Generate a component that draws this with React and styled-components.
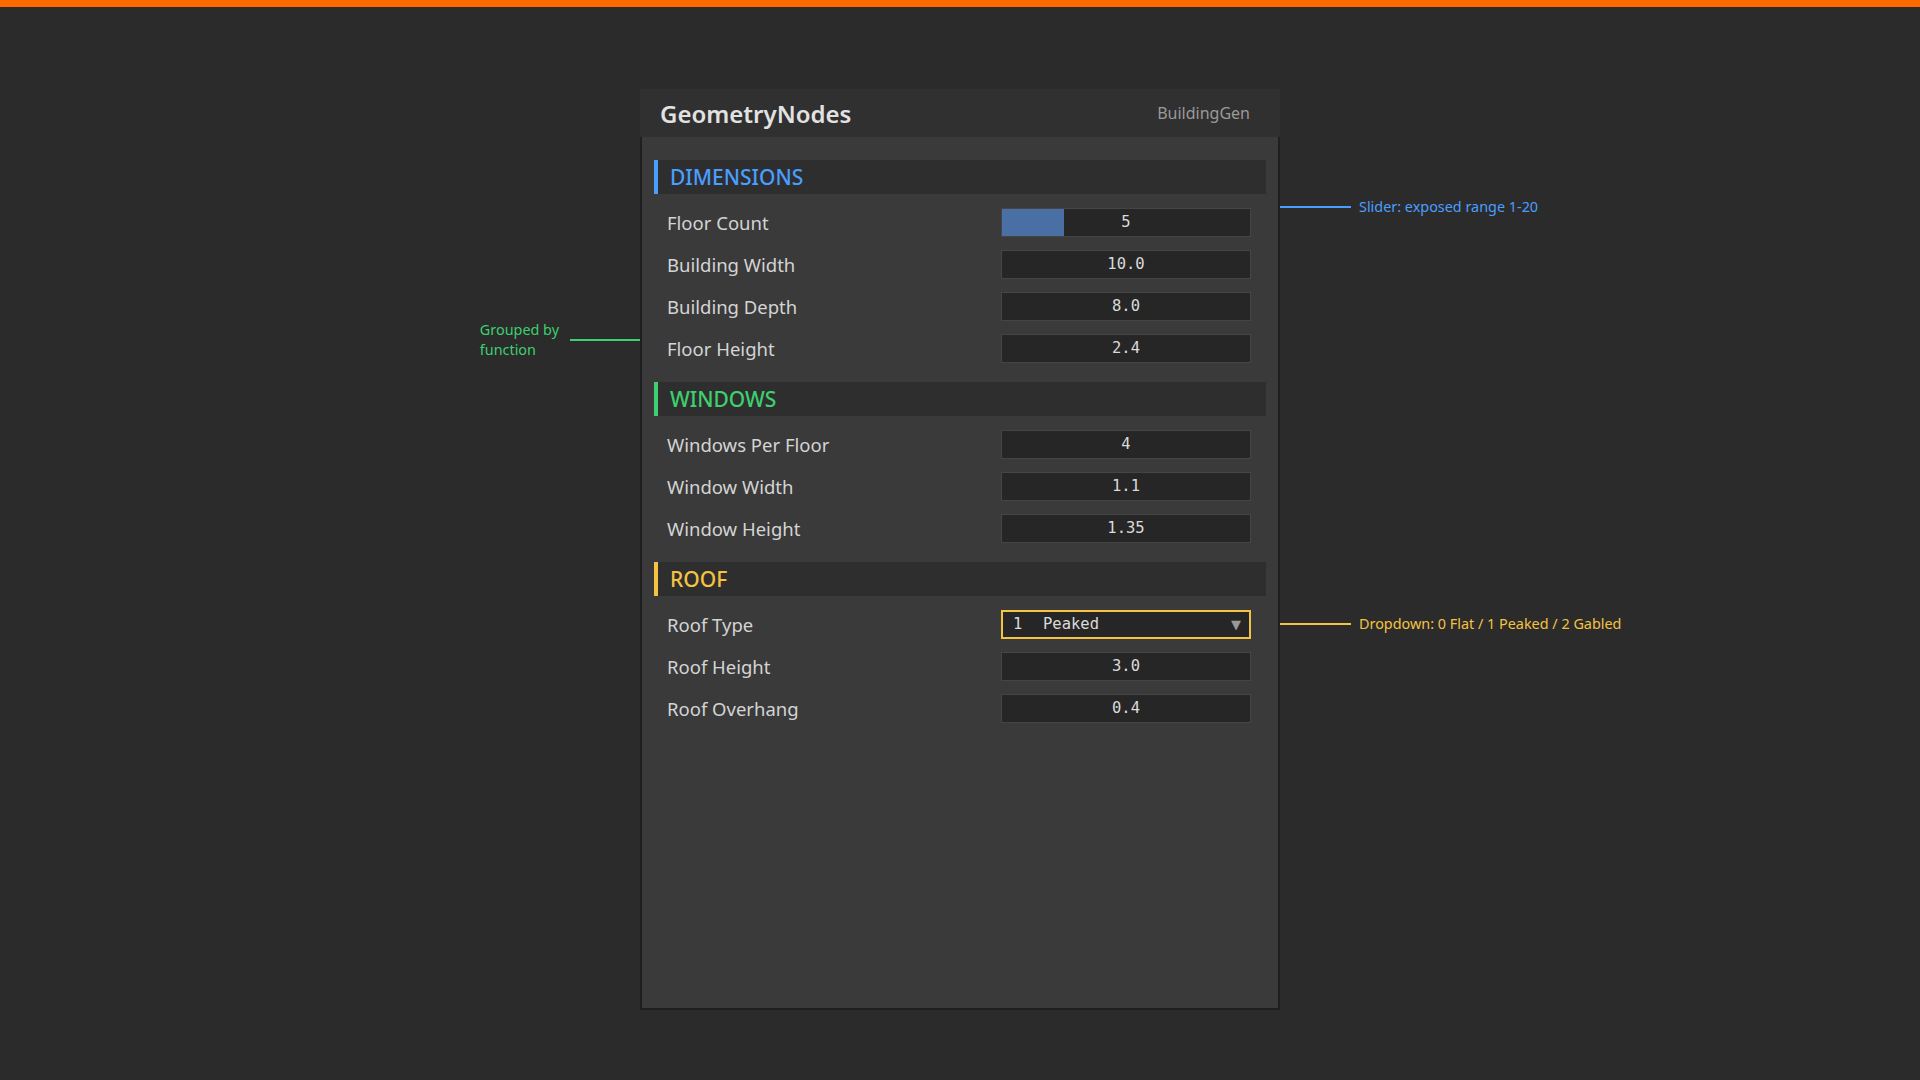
import React from "react";
import styled, { createGlobalStyle } from "styled-components";

const Global = createGlobalStyle`
  html, body { margin: 0; padding: 0; background: #2b2b2b; }
  body { font-family: "Noto Sans", "Open Sans", sans-serif; }
  * { box-sizing: border-box; }
`;

const Page = styled.div`
  width: 1920px;
  height: 1080px;
  background: #2b2b2b;
  display: flex;
  flex-direction: column;
  align-items: center;
  overflow: hidden;
`;

const TopBar = styled.div`
  align-self: stretch;
  height: 7px;
  background: #ff6a00;
`;

const Stage = styled.div`
  position: relative;
  margin-top: 82px;
  width: 640px;
`;

const Panel = styled.div`
  width: 640px;
  display: flex;
  flex-direction: column;
`;

const Header = styled.div`
  height: 48px;
  background: #303030;
  display: flex;
  align-items: center;
  justify-content: space-between;
  padding: 0 30px 0 20px;
`;

const Title = styled.div`
  font-size: 24px;
  font-weight: 600;
  color: #e2e2e2;
`;

const Sub = styled.div`
  font-size: 16px;
  color: #9a9a9a;
`;

const Body = styled.div`
  height: 873px;
  background: #3a3a3a;
  border: 2px solid #1f1f1f;
  border-top: none;
  padding: 23px 12px 0 12px;
  display: flex;
  flex-direction: column;
  gap: 13px;
`;

const Section = styled.div`
  display: flex;
  flex-direction: column;
`;

const SectionHead = styled.div`
  height: 34px;
  background: #2e2e2e;
  border-left: 4px solid ${(p) => p.$color};
  color: ${(p) => p.$color};
  display: flex;
  align-items: center;
  padding-left: 12px;
  font-size: 21px;
  font-weight: 500;
`;

const Rows = styled.div`
  padding-top: 7px;
  display: flex;
  flex-direction: column;
`;

const Row = styled.div`
  height: 42px;
  display: flex;
  align-items: center;
  justify-content: space-between;
  padding: 0 15px 0 13px;
`;

const Label = styled.div`
  font-size: 18.5px;
  color: #d4d4d4;
`;

const Field = styled.div`
  position: relative;
  width: 250px;
  height: 29px;
  background: #262626;
  border: 1px solid #454545;
  display: flex;
  align-items: center;
  justify-content: center;
  font-family: "DejaVu Sans Mono", "Liberation Mono", monospace;
  font-size: 15.5px;
  color: #dadada;
  overflow: hidden;
`;

const Fill = styled.div`
  position: absolute;
  left: 0;
  top: 0;
  bottom: 0;
  background: #4a6fa5;
`;

const FieldText = styled.span`
  position: relative;
`;

const Dropdown = styled.div`
  width: 250px;
  height: 29px;
  background: #262626;
  border: 2px solid #f5c242;
  display: flex;
  align-items: center;
  padding: 0 8px 0 10px;
  font-family: "DejaVu Sans Mono", "Liberation Mono", monospace;
  font-size: 15.5px;
  color: #dadada;
`;

const DropIndex = styled.span`
  width: 30px;
`;

const DropText = styled.span`
  flex: 1;
`;

const Caret = styled.span`
  font-size: 13px;
  color: #999;
  font-family: "DejaVu Sans", sans-serif;
`;

const Note = styled.div`
  position: absolute;
  top: ${(p) => p.$top}px;
  ${(p) => (p.$side === "left" ? "right: 100%;" : "left: 100%;")}
  display: flex;
  align-items: center;
  gap: ${(p) => (p.$side === "left" ? 11 : 8)}px;
  color: ${(p) => p.$color};
  font-size: 14.4px;
  line-height: 20px;
  white-space: nowrap;
`;

const Line = styled.div`
  width: ${(p) => p.$w}px;
  height: 2px;
  background: ${(p) => p.$color};
`;

const sections = [
  {
    title: "DIMENSIONS",
    color: "#4a9eff",
    rows: [
      { label: "Floor Count", value: "5", slider: 0.25 },
      { label: "Building Width", value: "10.0" },
      { label: "Building Depth", value: "8.0" },
      { label: "Floor Height", value: "2.4" },
    ],
  },
  {
    title: "WINDOWS",
    color: "#3ecf6e",
    rows: [
      { label: "Windows Per Floor", value: "4" },
      { label: "Window Width", value: "1.1" },
      { label: "Window Height", value: "1.35" },
    ],
  },
  {
    title: "ROOF",
    color: "#f5c242",
    rows: [
      { label: "Roof Type", dropdown: { idx: "1", text: "Peaked" } },
      { label: "Roof Height", value: "3.0" },
      { label: "Roof Overhang", value: "0.4" },
    ],
  },
];

export default function App() {
  return (
    <Page>
      <Global />
      <TopBar />
      <Stage>
        <Panel>
          <Header>
            <Title>GeometryNodes</Title>
            <Sub>BuildingGen</Sub>
          </Header>
          <Body>
            {sections.map((s) => (
              <Section key={s.title}>
                <SectionHead $color={s.color}>{s.title}</SectionHead>
                <Rows>
                  {s.rows.map((r) => (
                    <Row key={r.label}>
                      <Label>{r.label}</Label>
                      {r.dropdown ? (
                        <Dropdown>
                          <DropIndex>{r.dropdown.idx}</DropIndex>
                          <DropText>{r.dropdown.text}</DropText>
                          <Caret>▼</Caret>
                        </Dropdown>
                      ) : (
                        <Field>
                          {r.slider && <Fill style={{ width: `${r.slider * 100}%` }} />}
                          <FieldText>{r.value}</FieldText>
                        </Field>
                      )}
                    </Row>
                  ))}
                </Rows>
              </Section>
            ))}
          </Body>
        </Panel>
        <Note $top={108} $color="#4a9eff">
          <Line $w={71} $color="#4a9eff" />
          <span>Slider: exposed range 1-20</span>
        </Note>
        <Note $top={525} $color="#f5c242">
          <Line $w={71} $color="#f5c242" />
          <span>Dropdown: 0 Flat / 1 Peaked / 2 Gabled</span>
        </Note>
        <Note $top={231} $side="left" $color="#3ecf6e">
          <span>
            Grouped by
            <br />
            function
          </span>
          <Line $w={70} $color="#3ecf6e" />
        </Note>
      </Stage>
    </Page>
  );
}
